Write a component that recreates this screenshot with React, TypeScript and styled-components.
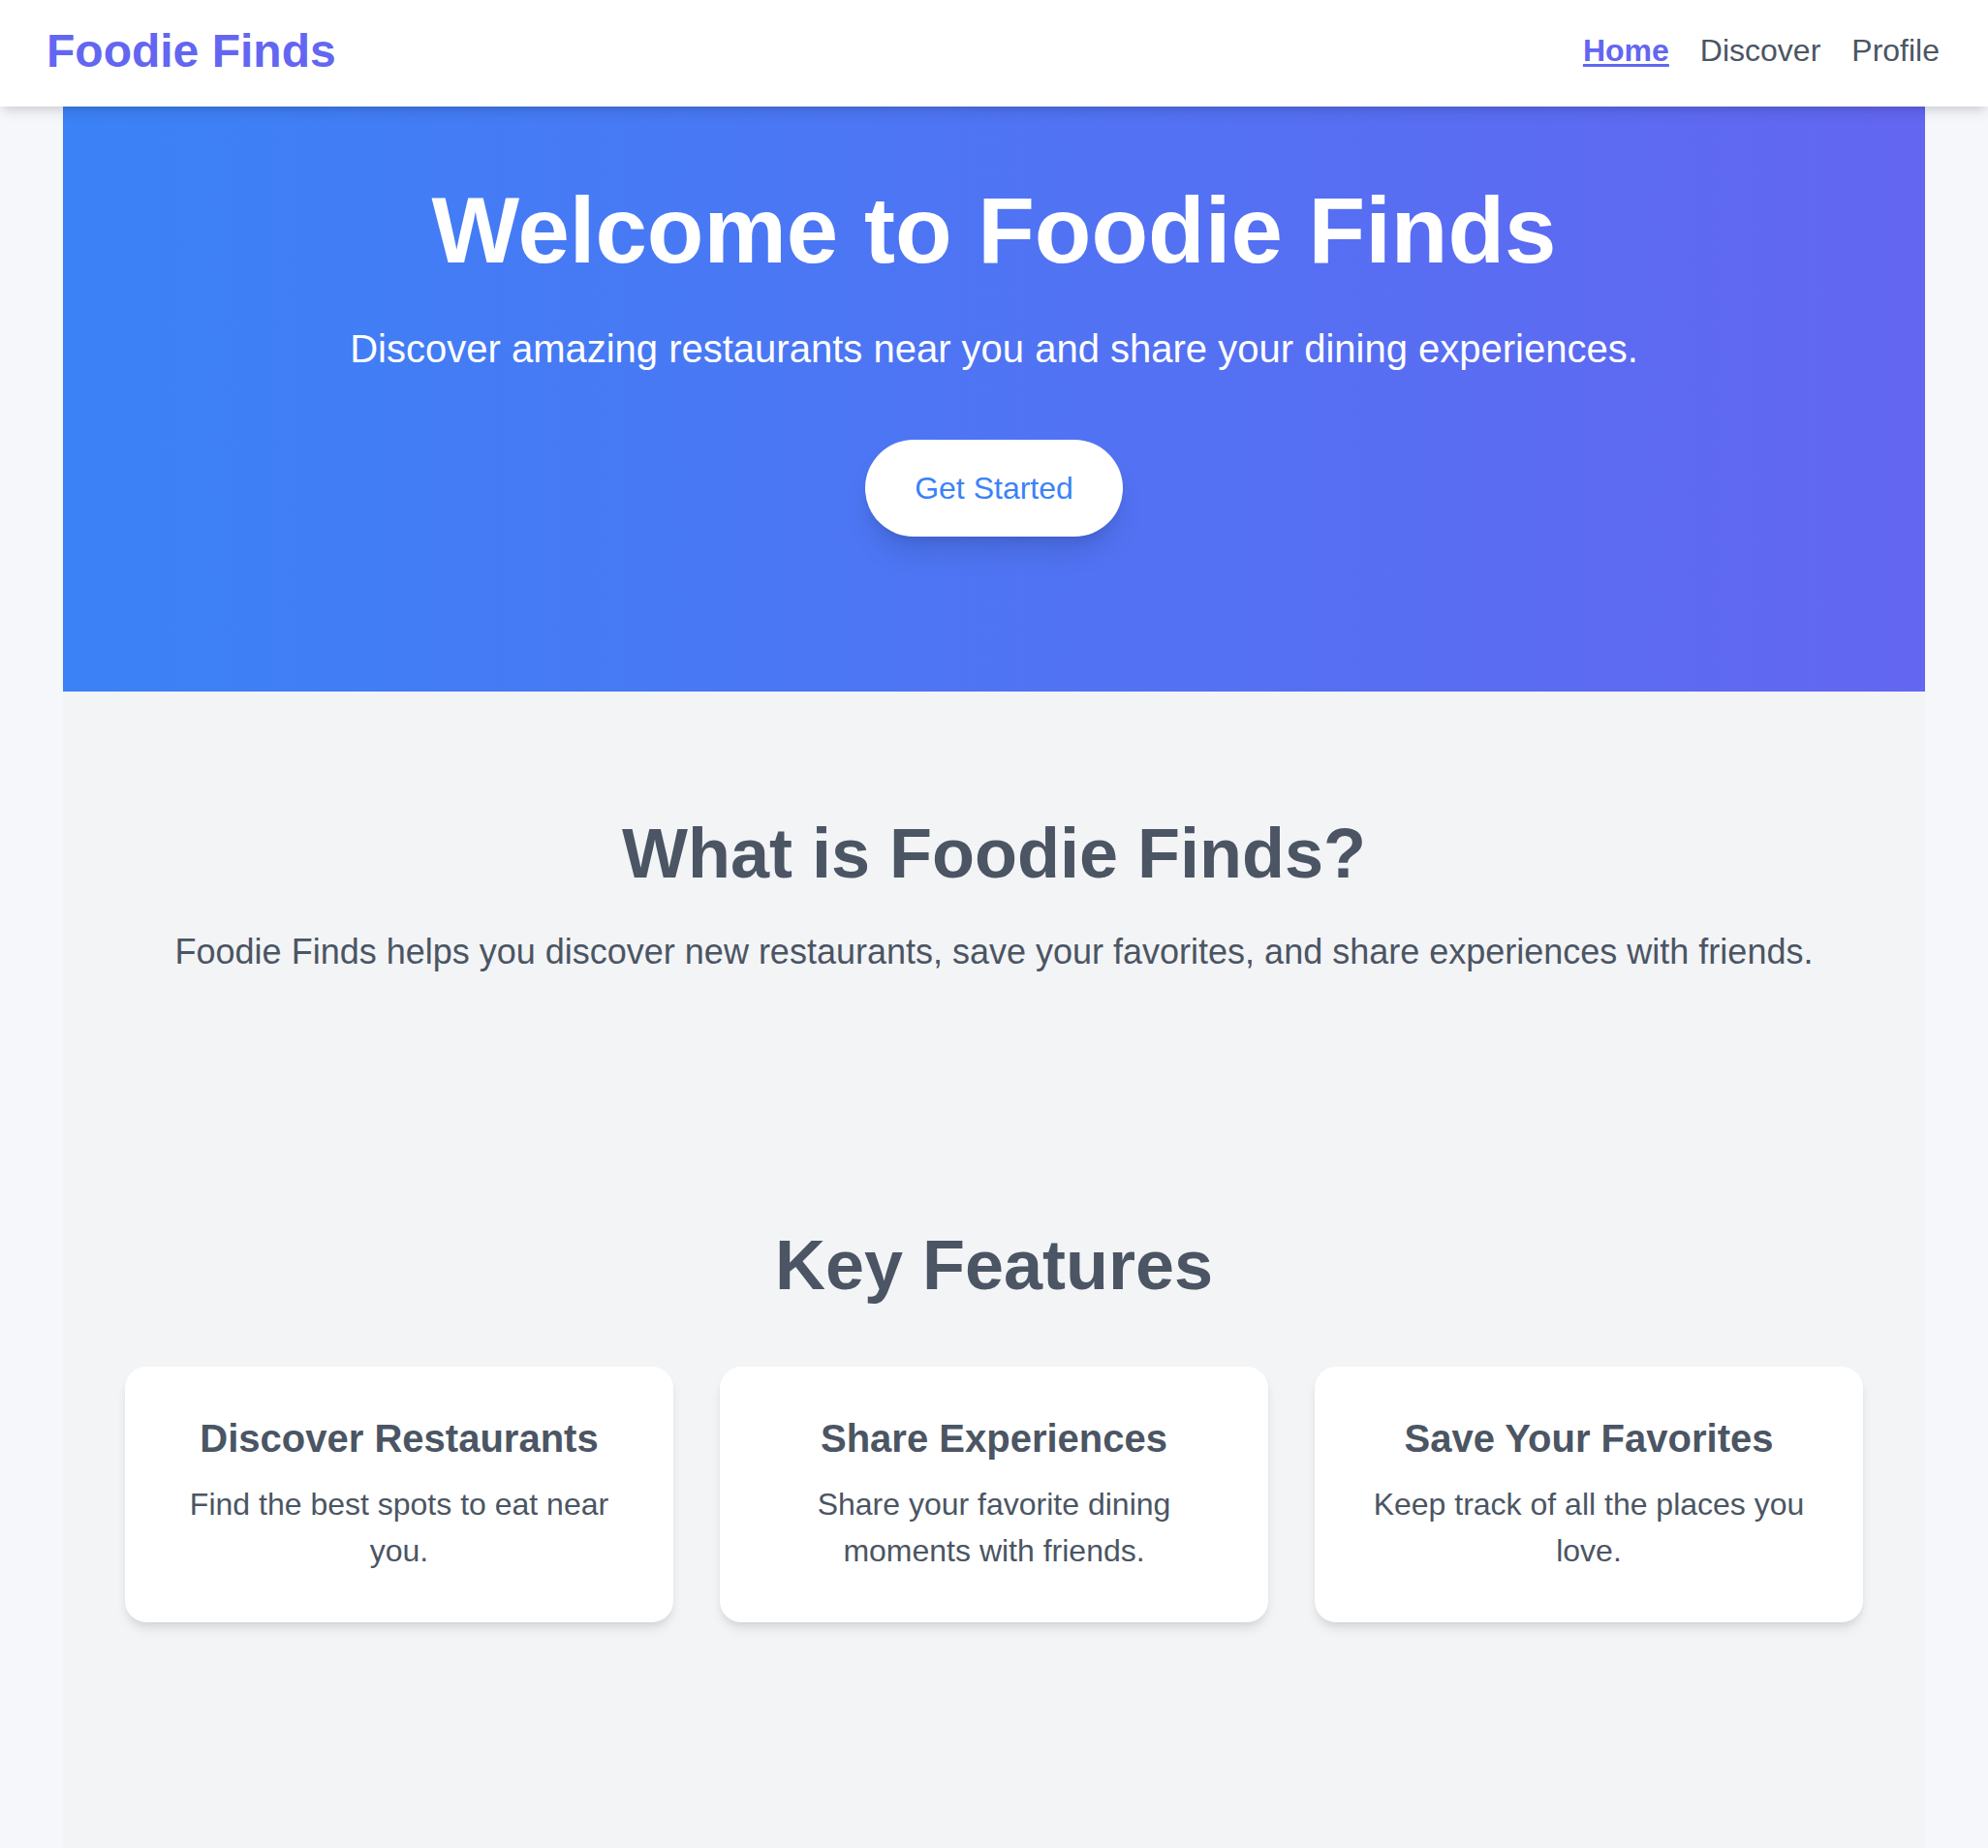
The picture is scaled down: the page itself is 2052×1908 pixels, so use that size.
import React from 'react'
import styled, { createGlobalStyle } from 'styled-components'

const GlobalStyle = createGlobalStyle`
    * {
        box-sizing: border-box;
    }
    html, body {
        margin: 0;
        padding: 0;
    }
    body {
        background: #f6f7fb;
        font-family: "Liberation Sans", Arial, Helvetica, sans-serif;
        color: #4b5563;
    }
`

type Feature = {
    title: string,
    text: string,
}

const features: Array<Feature> = [
    { title: 'Discover Restaurants', text: 'Find the best spots to eat near you.' },
    { title: 'Share Experiences', text: 'Share your favorite dining moments with friends.' },
    { title: 'Save Your Favorites', text: 'Keep track of all the places you love.' },
]

const navLinks = ['Home', 'Discover', 'Profile']

const App = () => {
    return (
        <>
            <GlobalStyle />
            <Header>
                <Logo>Foodie Finds</Logo>
                <Nav>
                    {navLinks.map((link) => (
                        <NavLink key={link} href="#" active={link === 'Home'}>
                            {link}
                        </NavLink>
                    ))}
                </Nav>
            </Header>
            <Main>
                <Hero>
                    <HeroTitle>Welcome to Foodie Finds</HeroTitle>
                    <HeroText>Discover amazing restaurants near you and share your dining experiences.</HeroText>
                    <HeroButton>Get Started</HeroButton>
                </Hero>
                <Section>
                    <SectionTitle>What is Foodie Finds?</SectionTitle>
                    <SectionText>
                        Foodie Finds helps you discover new restaurants, save your favorites, and share experiences with friends.
                    </SectionText>
                </Section>
                <Section>
                    <SectionTitle spaced>Key Features</SectionTitle>
                    <CardGrid>
                        {features.map((feature) => (
                            <Card key={feature.title}>
                                <CardTitle>{feature.title}</CardTitle>
                                <CardText>{feature.text}</CardText>
                            </Card>
                        ))}
                    </CardGrid>
                </Section>
            </Main>
        </>
    )
}

export default App

const Header = styled.header`
    position: relative;
    z-index: 10;
    display: flex;
    align-items: center;
    justify-content: space-between;
    height: 110px;
    padding: 0 50px 0 48px;
    background: #ffffff;
    box-shadow: 0 8px 12px -2px rgba(0, 0, 0, 0.1), 0 4px 8px -4px rgba(0, 0, 0, 0.1);
`
const Logo = styled.div`
    font-size: 48px;
    line-height: 62px;
    font-weight: 700;
    color: #6366f1;
    margin-top: -4px;
`
const Nav = styled.nav`
    display: flex;
    align-items: center;
    gap: 32px;
    margin-top: -6px;
`
const NavLink = styled.a<{ active?: boolean }>`
    font-size: 32px;
    line-height: 48px;
    text-decoration: ${({ active }) => active ? 'underline' : 'none'};
    text-underline-offset: 3px;
    text-decoration-thickness: 3px;
    font-weight: ${({ active }) => active ? 700 : 400};
    color: ${({ active }) => active ? '#6366f1' : '#4b5563'};
`
const Main = styled.main`
    max-width: 1922px;
    margin: 0 auto;
    min-height: calc(100vh - 110px);
    background: #f3f4f6;
`
const Hero = styled.section`
    display: flex;
    flex-direction: column;
    align-items: center;
    padding: 80px 32px 160px;
    background: linear-gradient(to right, #3b82f6, #6366f1);
    color: #ffffff;
    text-align: center;
`
const HeroTitle = styled.h1`
    margin: 0 0 46px;
    font-size: 96px;
    line-height: 96px;
    font-weight: 700;
`
const HeroText = styled.p`
    margin: 0 0 66px;
    font-size: 40px;
    line-height: 56px;
`
const HeroButton = styled.button`
    height: 100px;
    padding: 0 51px;
    border: none;
    border-radius: 9999px;
    background: #ffffff;
    color: #3b82f6;
    font-family: inherit;
    font-size: 32px;
    line-height: 48px;
    cursor: pointer;
    box-shadow: 0 20px 30px -6px rgba(0, 0, 0, 0.12), 0 8px 12px -6px rgba(0, 0, 0, 0.1);
`
const Section = styled.section`
    padding: 127px 64px 128px;
    text-align: center;
`
const SectionTitle = styled.h2<{ spaced?: boolean }>`
    margin: 0 0 ${({ spaced }) => spaced ? '65px' : '34px'};
    font-size: 72px;
    line-height: 80px;
    font-weight: 700;
    color: #4b5563;
`
const SectionText = styled.p`
    margin: 0;
    font-size: 36px;
    line-height: 56px;
    color: #4b5563;
`
const CardGrid = styled.div`
    display: grid;
    grid-template-columns: repeat(3, 1fr);
    gap: 48px;
`
const Card = styled.div`
    padding: 46px 48px 50px;
    background: #ffffff;
    border-radius: 22px;
    box-shadow: 0 8px 12px -2px rgba(0, 0, 0, 0.1), 0 4px 8px -4px rgba(0, 0, 0, 0.08);
`
const CardTitle = styled.h3`
    margin: 0 0 16px;
    font-size: 40px;
    line-height: 56px;
    font-weight: 700;
    color: #4b5563;
`
const CardText = styled.p`
    margin: 0;
    font-size: 32px;
    line-height: 48px;
    color: #4b5563;
`
